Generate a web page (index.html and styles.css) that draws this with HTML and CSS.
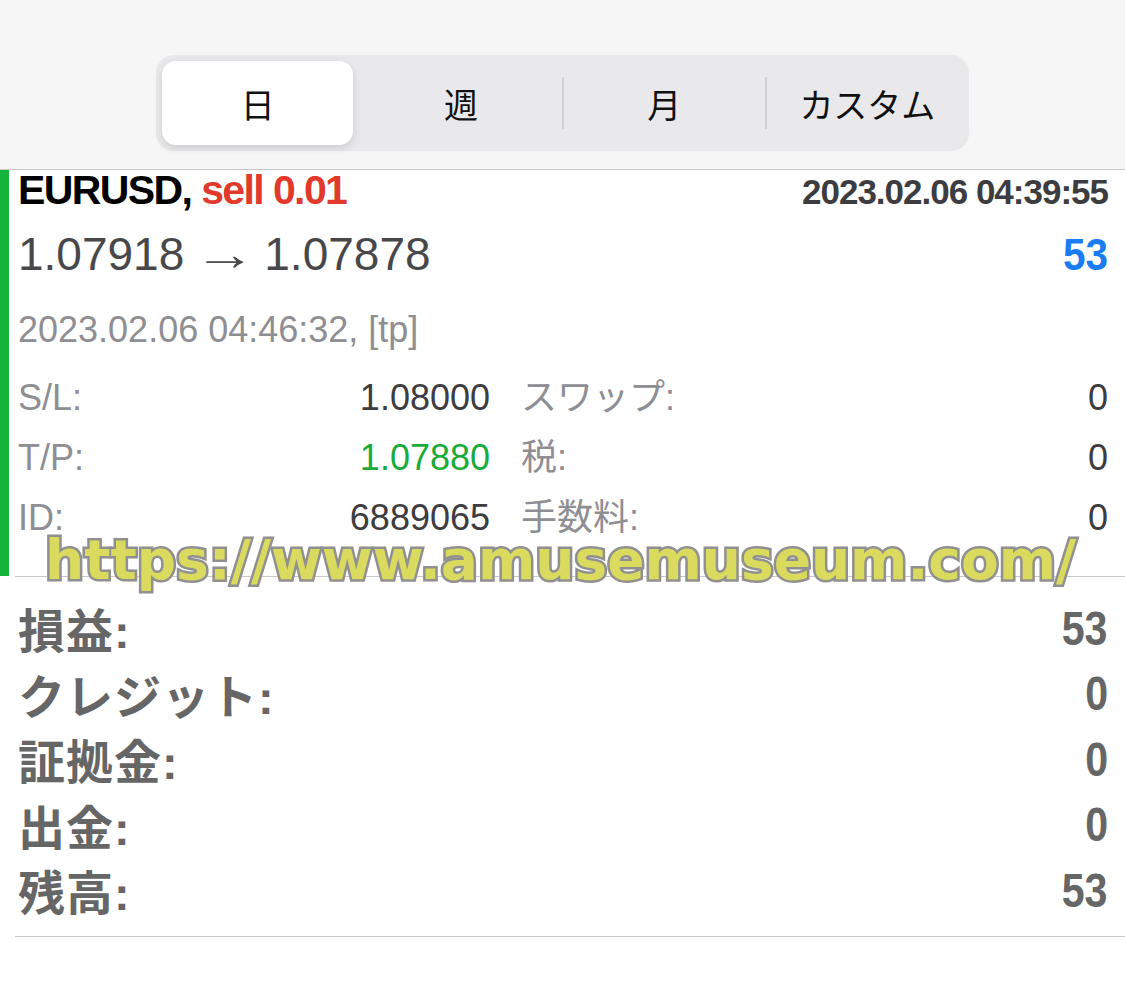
FILE: index.html
```html
<!DOCTYPE html>
<html lang="ja">
<head>
  <meta charset="utf-8">
  <link rel="stylesheet" href="styles.css">
</head>
<body>
  <div class="top">
    <div class="segments">
      <div class="seg selected">日</div>
      <div class="seg">週</div>
      <div class="seg sep">月</div>
      <div class="seg sep">カスタム</div>
    </div>
  </div>

  <div class="deal">
    <div class="deal-head">
      <span class="symbol">EURUSD, <span class="sell">sell 0.01</span></span>
      <span class="open-time">2023.02.06 04:39:55</span>
    </div>
    <div class="deal-price">
      <span>1.07918<span class="arrow">→</span>1.07878</span>
      <span class="profit">53</span>
    </div>
    <div class="close-time">2023.02.06 04:46:32, [tp]</div>
    <div class="details">
      <div class="cell"><span class="label">S/L:</span><span class="val">1.08000</span></div>
      <div class="cell"><span class="label">スワップ:</span><span class="val">0</span></div>
      <div class="cell"><span class="label">T/P:</span><span class="val tp">1.07880</span></div>
      <div class="cell"><span class="label">税:</span><span class="val">0</span></div>
      <div class="cell"><span class="label">ID:</span><span class="val">6889065</span></div>
      <div class="cell"><span class="label">手数料:</span><span class="val">0</span></div>
    </div>
  </div>
  <div class="rule"></div>

  <div class="summary">
    <div class="sum-row"><span class="sum-label">損益:</span><span class="sum-num">53</span></div>
    <div class="sum-row"><span class="sum-label">クレジット:</span><span class="sum-num">0</span></div>
    <div class="sum-row"><span class="sum-label">証拠金:</span><span class="sum-num">0</span></div>
    <div class="sum-row"><span class="sum-label">出金:</span><span class="sum-num">0</span></div>
    <div class="sum-row"><span class="sum-label">残高:</span><span class="sum-num">53</span></div>
  </div>
  <div class="rule"></div>

  <div class="watermark">https://www.amusemuseum.com/</div>
</body>
</html>
```

FILE: styles.css
```css
body {
  margin: 0;
  background: #fff;
  font-family: "Liberation Sans", "Noto Sans CJK JP", sans-serif;
  position: relative;
}

.top {
  box-sizing: border-box;
  height: 170px;
  padding-top: 55px;
  background: #f6f6f6;
  border-bottom: 1px solid #c6c6c8;
  display: flex;
  justify-content: center;
  align-items: flex-start;
}

.segments {
  width: 813px;
  height: 96px;
  background: #e9e9eb;
  border-radius: 18px;
  display: grid;
  grid-template-columns: repeat(4, 1fr);
}

.seg {
  position: relative;
  display: flex;
  align-items: center;
  justify-content: center;
  font-family: "Noto Sans CJK JP", sans-serif;
  font-size: 34px;
  color: #111;
}

.seg.selected {
  margin: 6px;
  background: #fff;
  border-radius: 14px;
  box-shadow: 0 3px 8px rgba(0, 0, 0, 0.12);
}

.seg.sep::before {
  content: "";
  position: absolute;
  left: -1px;
  top: 22px;
  bottom: 22px;
  width: 2px;
  background: #d1d1d6;
}

.deal {
  border-left: 9px solid #15b53c;
  padding: 0 17px 28px 9px;
}

.deal-head {
  display: flex;
  justify-content: space-between;
  align-items: baseline;
  height: 40px;
  line-height: 40px;
}

.symbol {
  font-size: 41px;
  font-weight: bold;
  letter-spacing: -1.6px;
  color: #000;
}

.sell {
  color: #e1392b;
}

.open-time {
  font-size: 35px;
  font-weight: bold;
  letter-spacing: -1px;
  color: #3c3c41;
}

.deal-price {
  margin-top: 16px;
  display: flex;
  justify-content: space-between;
  align-items: baseline;
  line-height: 56px;
  font-size: 46px;
  color: #48484a;
}

.arrow {
  display: inline-block;
  margin: 0 16px 0 18px;
  transform: scaleX(1.35);
}

/* condensed bold numbers */
.profit,
.sum-num {
  display: inline-block;
  font-weight: bold;
  transform-origin: right center;
}

.profit {
  font-size: 44px;
  color: #1a7df5;
  transform: scaleX(0.92);
}

.close-time {
  margin-top: 23px;
  font-size: 36px;
  line-height: 48px;
  color: #8e8e93;
}

.details {
  margin-top: 14px;
  display: grid;
  grid-template-columns: 472px 1fr;
  column-gap: 31px;
}

.cell {
  display: flex;
  justify-content: space-between;
  font-size: 36px;
  line-height: 60px;
}

.label {
  color: #8e8e93;
}

.val {
  color: #3c3c41;
}

.val.tp {
  color: #1aab3a;
}

.rule {
  height: 1px;
  margin-left: 15px;
  background: #c8c8cc;
}

.summary {
  padding: 18px 17px 13px 18px;
}

.sum-row {
  display: flex;
  justify-content: space-between;
  align-items: center;
  height: 65.5px;
  color: #666;
  font-weight: bold;
}

.sum-label {
  font-size: 47px;
  letter-spacing: 1px;
}

.sum-num {
  font-size: 49px;
  transform: scaleX(0.84);
}

.watermark {
  position: absolute;
  left: 45px;
  top: 533px;
  font-family: "DejaVu Sans", sans-serif;
  font-weight: bold;
  font-size: 55px;
  line-height: 55px;
  color: #dada5e;
  -webkit-text-stroke: 5px #909090;
  paint-order: stroke fill;
  white-space: nowrap;
}
```
